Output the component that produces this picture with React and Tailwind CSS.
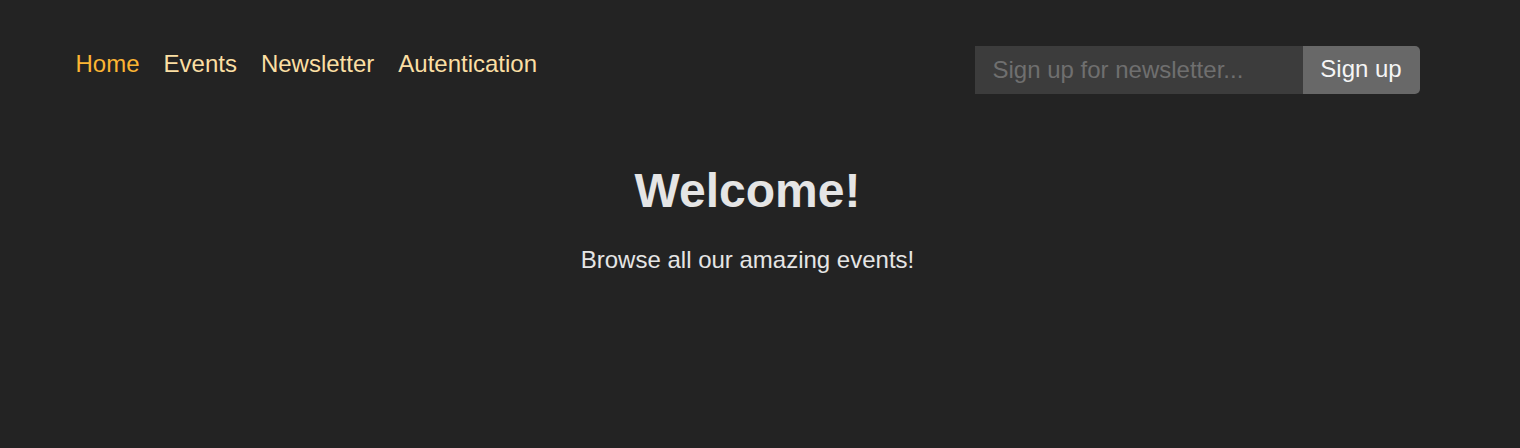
import React from 'react';

const links = ['Home', 'Events', 'Newsletter', 'Autentication'];

const MainNavigation = () => (
  <header className="max-w-[1440px] mx-auto px-12 pt-[46px] flex justify-between items-start">
    <nav>
      <ul className="flex gap-6 mt-[4px] text-2xl leading-[28px]">
        {links.map((label, i) => (
          <li key={label}>
            <a href="#" className={i === 0 ? 'text-[#fcb533]' : 'text-[#fbdfa3]'}>
              {label}
            </a>
          </li>
        ))}
      </ul>
    </nav>
    <form className="flex h-12" onSubmit={(e) => e.preventDefault()}>
      <input
        type="email"
        placeholder="Sign up for newsletter..."
        className="w-[328px] bg-[#3c3c3c] px-[18px] text-2xl text-[#e5e5e5] placeholder:text-[#6f6f6f] outline-none"
      />
      <button className="w-[117px] bg-[#686868] pb-[2px] text-center text-2xl text-[#f5f5f5] rounded-r-[5px]">
        Sign up
      </button>
    </form>
  </header>
);

export default function App() {
  return (
    <div className="min-h-screen bg-[#232323] font-['Liberation_Sans',Arial,sans-serif]">
      <div className="w-[1495px]">
        <MainNavigation />
        <main className="text-center pt-[69px] text-[#e5e5e5]">
          <h1 className="text-5xl font-bold leading-[55px]">Welcome!</h1>
          <p className="mt-[28px] text-2xl leading-[28px]">Browse all our amazing events!</p>
        </main>
      </div>
    </div>
  );
}
